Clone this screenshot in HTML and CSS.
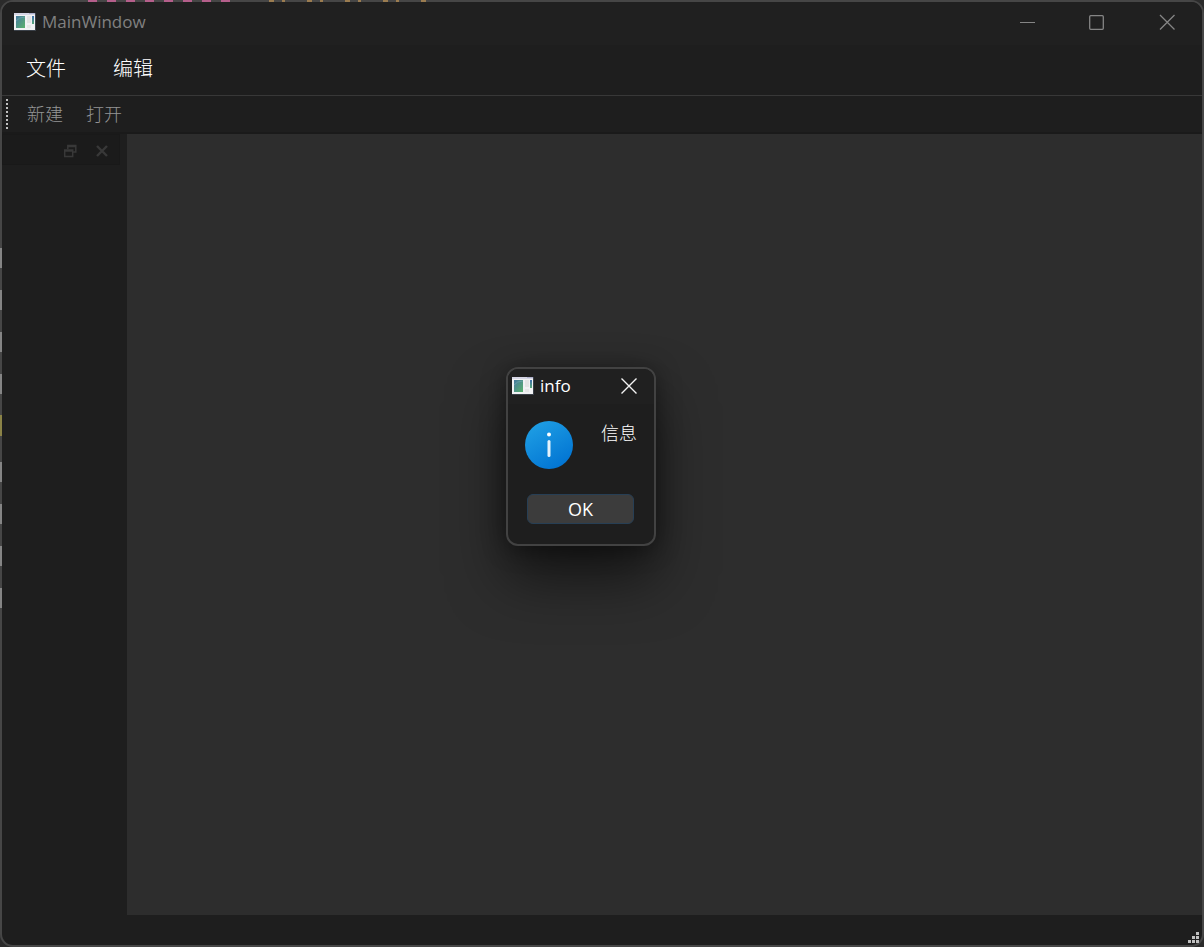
FILE: index.html
```html
<!DOCTYPE html>
<html lang="zh-CN">
<head>
<meta charset="utf-8">
<meta name="viewport" content="width=device-width, initial-scale=1">
<title>MainWindow</title>
<link rel="stylesheet" href="styles.css">
</head>
<body>
<svg class="defs" width="0" height="0" aria-hidden="true">
  <defs>
    <linearGradient id="pane" x1="0" y1="0" x2="1" y2="1">
      <stop offset="0" stop-color="#4679a0"/><stop offset="1" stop-color="#5bb26c"/>
    </linearGradient>
    <linearGradient id="side" x1="0" y1="0" x2="0" y2="1">
      <stop offset="0" stop-color="#3f6fae"/><stop offset="1" stop-color="#58a878"/>
    </linearGradient>
    <linearGradient id="blue" x1="0.2" y1="0" x2="0.8" y2="1">
      <stop offset="0" stop-color="#1f9fe4"/><stop offset="1" stop-color="#0072d2"/>
    </linearGradient>
    <symbol id="app" viewBox="0 0 22 18">
      <rect width="22" height="18" fill="#3a4048"/>
      <rect x="0" y="0" width="21" height="17" fill="#f1f2f4"/>
      <rect x="0" y="0" width="21" height="2" fill="#d5d5e4"/>
      <rect x="15" y="0" width="6" height="1" fill="#aeb0cc"/>
      <rect x="2" y="3" width="9" height="12" fill="url(#pane)"/>
      <path d="M2 8Q5 4 11 4" stroke="#7faec0" stroke-opacity=".5" fill="none"/>
      <rect x="13" y="3" width="4" height="7" fill="#e3e4e4"/>
      <rect x="13" y="12" width="4" height="3" fill="#e6e7e7"/>
      <rect x="18" y="3" width="2" height="8" fill="url(#side)"/>
    </symbol>
  </defs>
</svg>
<div class="window">
  <div class="edge edge-top" aria-hidden="true"></div>
  <div class="edge edge-left" aria-hidden="true"></div>
  <header class="titlebar">
    <svg class="app-icon"><use href="#app"/></svg>
    <h1 class="title">MainWindow</h1>
    <div class="controls">
      <button class="control" aria-label="Minimize"><svg width="16" height="16" viewBox="0 0 16 16"><path d="M1 8.500h15" stroke="#858585" fill="none"/></svg></button>
      <button class="control" aria-label="Maximize"><svg width="16" height="16" viewBox="0 0 16 16"><rect x=".7" y="1.700" width="13.600" height="13.600" rx="1" stroke="#858585" stroke-width="1.300" fill="none"/></svg></button>
      <button class="control" aria-label="Close"><svg width="16" height="16" viewBox="0 0 16 16"><path d="M1 1l14.500 14.500M15.500 1L1 15.500" stroke="#858585" stroke-width="1.300" fill="none"/></svg></button>
    </div>
  </header>
  <nav class="menubar">
    <button class="menu">文件</button>
    <button class="menu">编辑</button>
  </nav>
  <div class="toolbar">
    <span class="grip"></span>
    <button class="tool">新建</button>
    <button class="tool">打开</button>
  </div>
  <div class="body">
    <aside class="dock">
      <div class="dock-title">
        <button class="dock-button" aria-label="Float"><svg width="14" height="14" viewBox="0 0 14 14" fill="none" stroke="#383838" stroke-width="1.500"><path d="M4.800 5V1.500h8v6.500H10M4.800 2.500h8"/><path d="M1.700 6h8v6.500h-8zM1.700 7h8"/></svg></button>
        <button class="dock-button" aria-label="Close panel"><svg width="14" height="14" viewBox="0 0 14 14"><path d="M2 2l10 10M12 2L2 12" stroke="#383838" stroke-width="2.400"/></svg></button>
      </div>
    </aside>
    <main class="canvas"></main>
  </div>
  <footer class="statusbar">
    <svg width="12" height="12" viewBox="0 0 12 12" fill="#c0c0c0" aria-hidden="true"><path d="M8 0h3v3H8zM8 4h3v3H8zM4 4h3v3H4zM0 8h3v3H0zM4 8h3v3H4zM8 8h3v3H8z"/></svg>
  </footer>
  <section class="dialog" role="dialog" aria-labelledby="dialog-title">
    <header class="dialog-bar">
      <svg class="app-icon"><use href="#app"/></svg>
      <h2 class="title" id="dialog-title">info</h2>
      <button class="dialog-close" aria-label="Close"><svg width="16" height="16" viewBox="0 0 16 16"><path d="M.5 .5l15 15M15.500 .5L.5 15.500" stroke="#f4f4f4" stroke-width="1.400" fill="none"/></svg></button>
    </header>
    <div class="dialog-content">
      <svg width="48" height="48" viewBox="0 0 48 48" aria-hidden="true"><circle cx="24" cy="24" r="24" fill="url(#blue)"/><circle cx="24" cy="13.500" r="2" fill="#fff"/><path d="M24 20.500v14" stroke="#e6f3fc" stroke-width="3" stroke-linecap="round"/></svg>
      <p class="message">信息</p>
    </div>
    <button class="ok">OK</button>
  </section>
</div>
</body>
</html>
```
FILE: styles.css
```css
* { box-sizing: border-box; }

body {
  margin: 0;
  background: #2b2b2b;
  color: #fff;
  font: 18px/24px "Open Sans", "Noto Sans CJK SC", sans-serif;
}

button {
  margin: 0;
  padding: 0;
  border: 0;
  background: none;
  color: inherit;
  font: inherit;
}

svg { display: block; flex: none; }
.defs { position: absolute; }

.window {
  position: relative;
  display: flex;
  flex-direction: column;
  min-height: 100vh;
  border: 2px solid #464646;
  border-radius: 13px;
  background: #1e1e1e;
}

/* Desktop content showing through the translucent window frame */
.edge { position: absolute; }

.edge-top {
  top: -2px;
  left: 86px;
  width: 344px;
  height: 2px;
  background:
    repeating-linear-gradient(90deg, #b55f8b 0 9px, #464646 9px 19px) 0 0 / 152px 2px no-repeat,
    repeating-linear-gradient(90deg, #9b7c50 0 5px, #464646 5px 13px, #9b7c50 13px 16px, #464646 16px 38px) 181px 0 / 163px 2px no-repeat;
}

.edge-left {
  top: 246px;
  left: -2px;
  width: 2px;
  height: 360px;
  background:
    linear-gradient(#8b8347, #8b8347) 0 167px / 2px 21px no-repeat,
    repeating-linear-gradient(#858585 0 20px, #464646 20px 42px) 0 0 / 2px 167px no-repeat,
    repeating-linear-gradient(#858585 0 20px, #464646 20px 42px) 0 214px / 2px 146px no-repeat;
}

.titlebar {
  display: flex;
  align-items: center;
  height: 43px;
  padding: 0 0 3px 12px;
  border-radius: 11px 11px 0 0;
  background: #202020;
  color: #808080;
}

.app-icon { width: 22px; height: 18px; }

.title {
  margin: 0 0 0 6px;
  font-size: 17px;
  font-weight: 400;
}

.controls { display: flex; margin-left: auto; }

.control {
  display: grid;
  place-items: center;
  width: 70px;
  height: 40px;
}

.menubar {
  display: flex;
  gap: 47px;
  padding: 8px 24px 10px;
  border-bottom: 1px solid #383838;
  font-size: 20px;
  font-weight: 300;
  line-height: 32px;
}

.toolbar {
  display: flex;
  align-items: center;
  height: 38px;
  padding: 0 4px;
  border-bottom: 2px solid #1a1a1a;
  color: #949494;
  font-weight: 300;
}

.grip {
  width: 2px;
  height: 30px;
  margin-right: 19px;
  background: repeating-linear-gradient(#c0c0c0 0 2px, transparent 2px 4px);
}

.tool { margin-right: 23px; }

.body { display: flex; flex: 1; }
.dock { width: 125px; padding-right: 7px; }

.dock-title {
  display: flex;
  align-items: center;
  justify-content: flex-end;
  gap: 18px;
  height: 31px;
  padding: 2px 10px 0 0;
  border: 1px solid #191919;
  background: #1b1b1b;
}

.canvas { flex: 1; background: #2d2d2d; }

.statusbar {
  display: flex;
  align-items: flex-end;
  justify-content: flex-end;
  height: 30px;
  padding: 0 2px 1px;
}

.dialog {
  position: absolute;
  top: 365px;
  left: calc(50% - 96px);
  width: 150px;
  border: 2px solid #424242;
  border-radius: 12px;
  background: #1e1e1e;
  box-shadow: 0 32px 56px rgba(0, 0, 0, .55), 0 2px 24px rgba(0, 0, 0, .4);
}

.dialog-bar {
  display: flex;
  align-items: center;
  height: 35px;
  padding: 0 17px 2px 4px;
  border-radius: 10px 10px 0 0;
  background: #202020;
}

.dialog-close { margin-left: auto; }

.dialog-content {
  display: flex;
  justify-content: space-between;
  padding: 17px 17px 0;
}

.message { margin: 0; font-weight: 300; }

.ok {
  display: block;
  width: 107px;
  height: 30px;
  margin: 25px 19px 20px;
  border: 1px solid #273f55;
  border-radius: 6px;
  background: #3c3c3c;
}
```
